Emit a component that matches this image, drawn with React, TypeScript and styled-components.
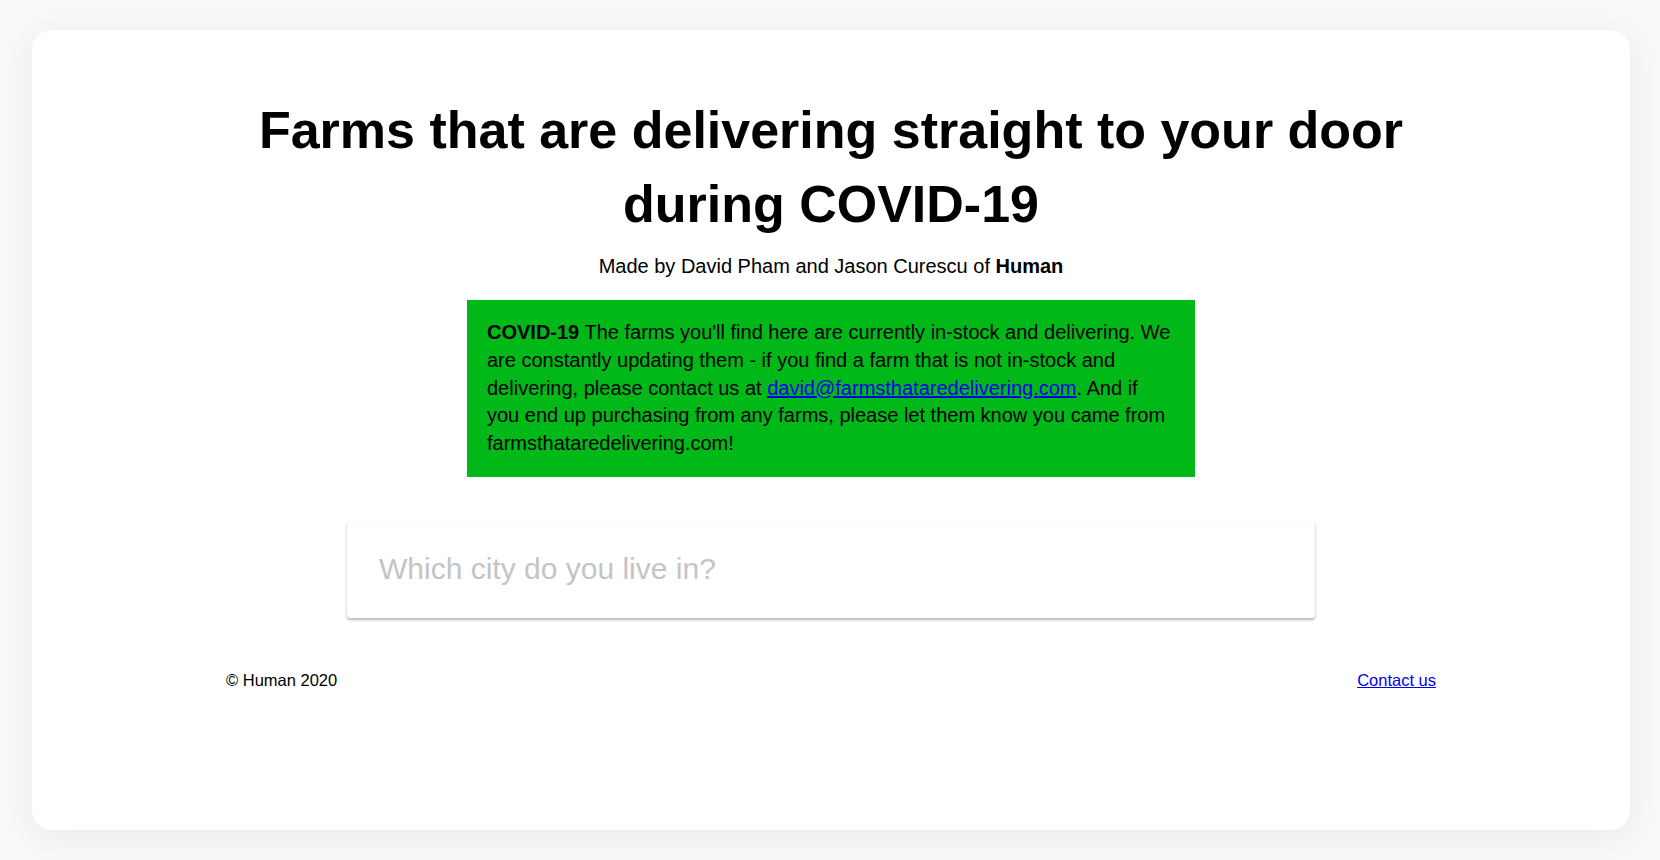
import React from "react";
import styled, { createGlobalStyle } from "styled-components";

const GlobalStyle = createGlobalStyle`
  html, body {
    margin: 0;
    padding: 0;
    background: #f9f9f9;
    font-family: "Liberation Sans", Arial, Helvetica, sans-serif;
    color: #000;
  }
  * { box-sizing: border-box; }
`;

const Page = styled.div`
  padding: 30px 30px 30px 32px;
`;

const Card = styled.main`
  background: #fff;
  border-radius: 20px;
  min-height: 800px;
  box-shadow: 0 6px 36px rgba(0, 0, 0, 0.07);
  padding-top: 63px;
  display: flex;
  flex-direction: column;
  align-items: center;
`;

const Content = styled.div`
  width: 1210px;
  display: flex;
  flex-direction: column;
  align-items: center;
`;

const Title = styled.h1`
  margin: 0;
  font-size: 52px;
  line-height: 74px;
  font-weight: 700;
  text-align: center;
`;

const Subtitle = styled.p`
  margin: 13px 0 0;
  font-size: 20px;
  line-height: 24px;
  text-align: center;
`;

const Notice = styled.div`
  margin-top: 22px;
  width: 728px;
  background: #00b818;
  padding: 19px 20px;
  font-size: 20px;
  line-height: 27.8px;
`;

const MailLink = styled.a`
  color: #0000ee;
  text-decoration: underline;
`;

const SearchBox = styled.div`
  margin-top: 44px;
  width: 968px;
  height: 97px;
  background: #fff;
  border-radius: 3px;
  box-shadow: 0 2px 3px rgba(0, 0, 0, 0.28), 0 0 1px rgba(0, 0, 0, 0.1);
  display: flex;
  align-items: center;
  padding: 0 32px;
`;

const SearchInput = styled.input`
  border: none;
  outline: none;
  width: 100%;
  font-family: "Liberation Sans", Arial, Helvetica, sans-serif;
  font-size: 30px;
  padding: 0;
  background: transparent;
  color: #000;
  &::placeholder {
    color: #c4c4c4;
  }
`;

const Footer = styled.footer`
  margin-top: 52px;
  width: 100%;
  display: flex;
  justify-content: space-between;
  font-size: 16.5px;
  line-height: 20px;
`;

const FooterLink = styled.a`
  color: #0000ee;
  text-decoration: underline;
`;

export default function App() {
  return (
    <>
      <GlobalStyle />
      <Page>
        <Card>
          <Content>
            <Title>
              Farms that are delivering straight to your door during COVID-19
            </Title>
            <Subtitle>
              Made by David Pham and Jason Curescu of <b>Human</b>
            </Subtitle>
            <Notice>
              <b>COVID-19</b> The farms you'll find here are currently in-stock
              and delivering. We are constantly updating them - if you find a
              farm that is not in-stock and delivering, please contact us at{" "}
              <MailLink href="#">david@farmsthataredelivering.com</MailLink>.
              And if you end up purchasing from any farms, please let them know
              you came from farmsthataredelivering.com!
            </Notice>
            <SearchBox>
              <SearchInput placeholder="Which city do you live in?" />
            </SearchBox>
            <Footer>
              <span>© Human 2020</span>
              <FooterLink href="#">Contact us</FooterLink>
            </Footer>
          </Content>
        </Card>
      </Page>
    </>
  );
}
